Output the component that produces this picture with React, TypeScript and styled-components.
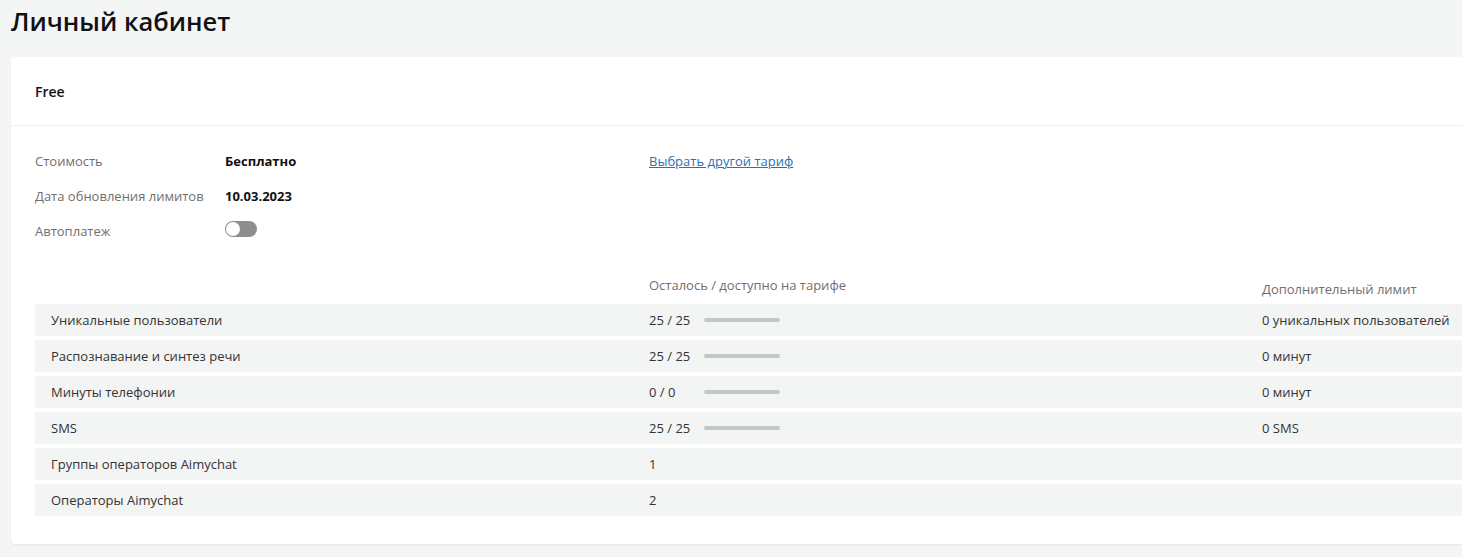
import React, { FC, useState } from "react";
import styled, { createGlobalStyle } from "styled-components";

const GlobalStyle = createGlobalStyle`
  html, body {
    margin: 0;
    padding: 0;
    background: #f4f5f5;
    overflow: hidden;
  }
  body {
    font-family: "Open Sans", "Noto Sans", Arial, sans-serif;
    color: #1f1f1f;
  }
`;

// страница
const Page = styled.div`
  width: 1520px;
  padding: 0 0 12px 11px;
`;

const Title = styled.h1`
  margin: 0;
  padding-top: 4px;
  height: 53px;
  font-size: 25.5px;
  font-weight: 600;
  line-height: 34px;
  color: #111;
`;

const Card = styled.div`
  background: #fff;
  border-radius: 4px;
  box-shadow: 0 1px 2px rgba(0, 0, 0, 0.06);
`;

const CardHeader = styled.div`
  height: 68px;
  padding: 0 24px;
  display: flex;
  align-items: center;
  border-bottom: 1px solid #eeefef;
  font-size: 14px;
  font-weight: 600;
  color: #111;
`;

const CardBody = styled.div`
  padding: 24px 24px 28px;
`;

// блок информации о тарифе
const Info = styled.div`
  display: grid;
  grid-template-columns: 190px 424px 1fr;
  grid-auto-rows: 22px;
  row-gap: 13px;
  align-items: center;
  font-size: 13px;
`;

const InfoLabel = styled.div`
  color: #6f6f6f;
`;

const InfoValue = styled.div`
  font-weight: 700;
  color: #111;
`;

const Link = styled.a`
  color: #2f6fb0;
  text-decoration: underline;
  cursor: pointer;
`;

const Toggle = styled.button<{ $on: boolean }>`
  position: relative;
  width: 32px;
  height: 16px;
  padding: 0;
  border: none;
  border-radius: 8px;
  background: ${(p) => (p.$on ? "#2f6fb0" : "#8d8e90")};
  cursor: pointer;
  &:after {
    content: "";
    position: absolute;
    top: 1px;
    left: ${(p) => (p.$on ? "17px" : "1px")};
    width: 14px;
    height: 14px;
    border-radius: 50%;
    background: #fff;
  }
`;

// таблица лимитов
const Table = styled.div`
  margin-top: 34px;
  display: flex;
  flex-direction: column;
  gap: 4px;
`;

const Columns = styled.div`
  display: grid;
  grid-template-columns: 598px 613px 1fr;
  padding-left: 16px;
  font-size: 13px;
`;

const HeadRow = styled(Columns)`
  height: 24px;
  color: #6f6f6f;
`;

const HeadCell = styled.div<{ $shift?: number }>`
  padding-top: ${(p) => p.$shift || 0}px;
`;

const Row = styled(Columns)`
  height: 32px;
  align-items: center;
  background: #f3f4f4;
  color: #333;
`;

const Usage = styled.div`
  display: flex;
  align-items: center;
`;

const Amount = styled.span`
  width: 55px;
`;

const Bar = styled.div`
  width: 76px;
  height: 4px;
  border-radius: 2px;
  background: #c4c6c8;
`;

interface Limit {
  name: string;
  value: string;
  bar: boolean;
  extra: string;
}

const limits: Limit[] = [
  { name: "Уникальные пользователи", value: "25 / 25", bar: true, extra: "0 уникальных пользователей" },
  { name: "Распознавание и синтез речи", value: "25 / 25", bar: true, extra: "0 минут" },
  { name: "Минуты телефонии", value: "0 / 0", bar: true, extra: "0 минут" },
  { name: "SMS", value: "25 / 25", bar: true, extra: "0 SMS" },
  { name: "Группы операторов Aimychat", value: "1", bar: false, extra: "" },
  { name: "Операторы Aimychat", value: "2", bar: false, extra: "" },
];

const App: FC = () => {
  const [autoPay, setAutoPay] = useState(false);

  return (
    <Page>
      <GlobalStyle />
      <Title>Личный кабинет</Title>
      <Card>
        <CardHeader>Free</CardHeader>
        <CardBody>
          <Info>
            <InfoLabel>Стоимость</InfoLabel>
            <InfoValue>Бесплатно</InfoValue>
            <div>
              <Link>Выбрать другой тариф</Link>
            </div>
            <InfoLabel>Дата обновления лимитов</InfoLabel>
            <InfoValue>10.03.2023</InfoValue>
            <div />
            <InfoLabel>Автоплатеж</InfoLabel>
            <div>
              <Toggle $on={autoPay} onClick={() => setAutoPay(!autoPay)} />
            </div>
            <div />
          </Info>
          <Table>
            <HeadRow>
              <div />
              <HeadCell>Осталось / доступно на тарифе</HeadCell>
              <HeadCell $shift={4}>Дополнительный лимит</HeadCell>
            </HeadRow>
            {limits.map((l) => (
              <Row key={l.name}>
                <div>{l.name}</div>
                <Usage>
                  <Amount>{l.value}</Amount>
                  {l.bar && <Bar />}
                </Usage>
                <div>{l.extra}</div>
              </Row>
            ))}
          </Table>
        </CardBody>
      </Card>
    </Page>
  );
};

export default App;
